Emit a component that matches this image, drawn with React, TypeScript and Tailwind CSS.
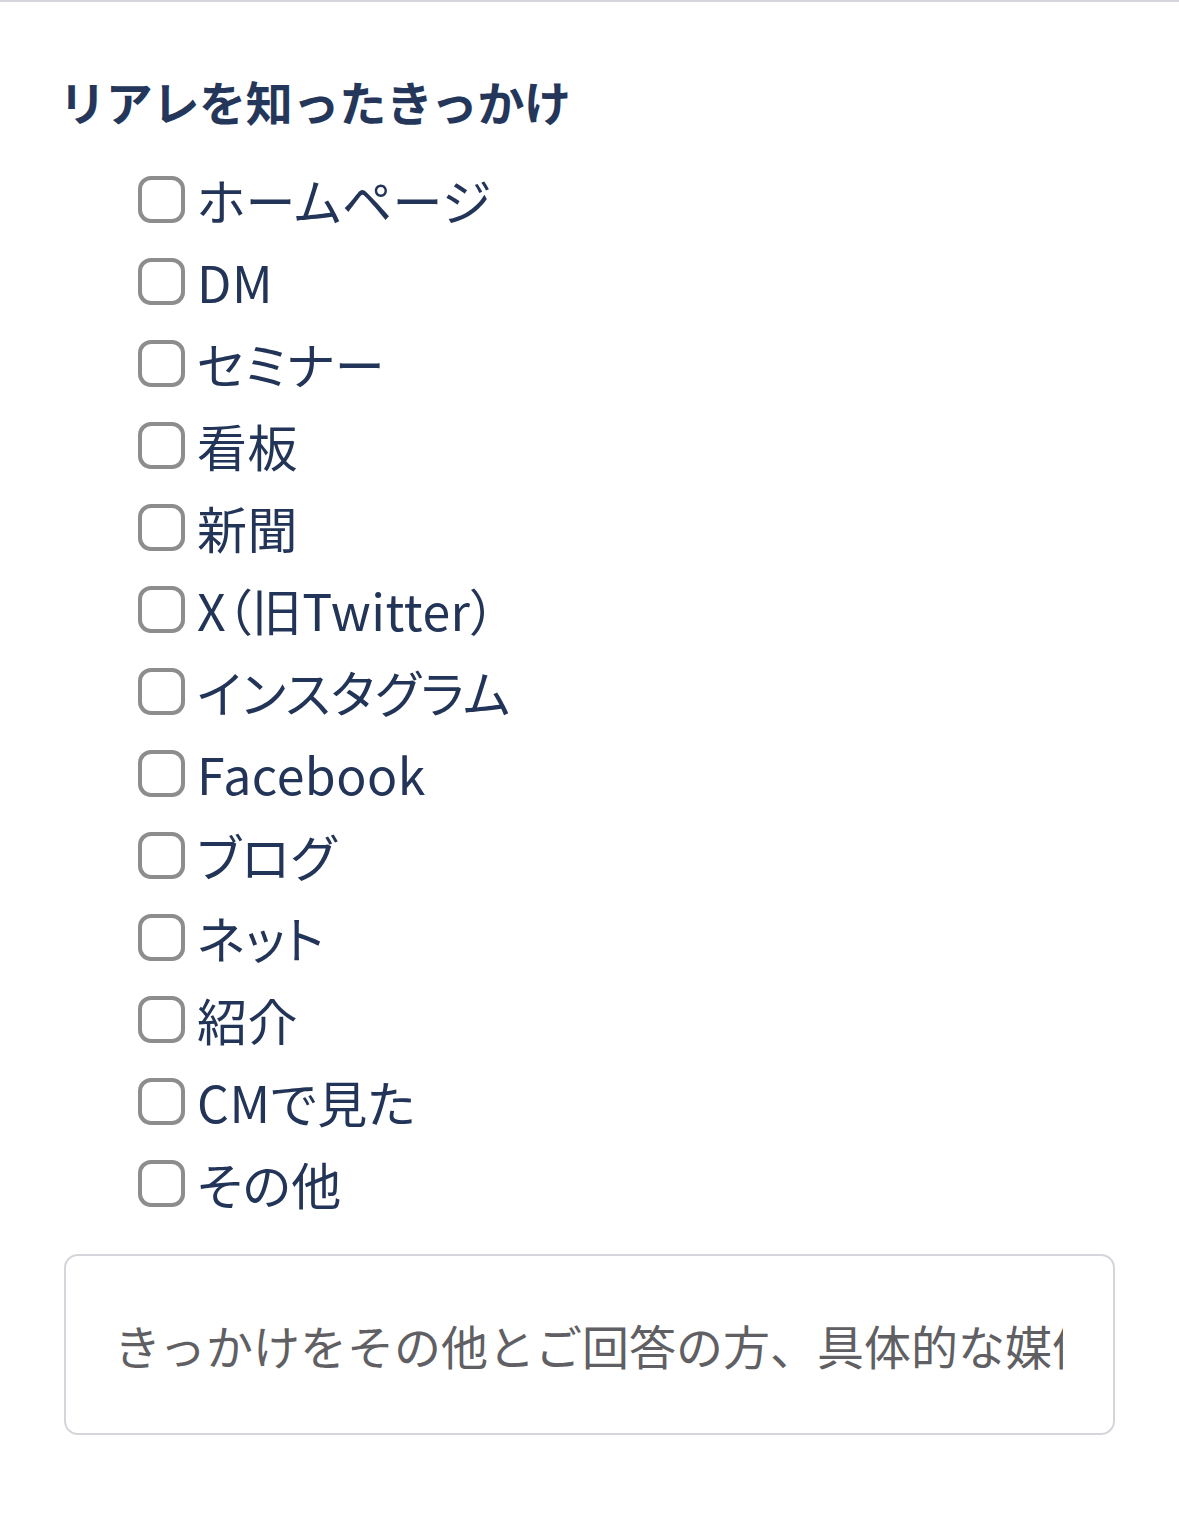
import { useState } from "react";

const options = [
  "ホームページ",
  "DM",
  "セミナー",
  "看板",
  "新聞",
  "X（旧Twitter）",
  "インスタグラム",
  "Facebook",
  "ブログ",
  "ネット",
  "紹介",
  "CMで見た",
  "その他",
];

export default function App() {
  const [checked, setChecked] = useState<string[]>([]);
  const [other, setOther] = useState("");

  const toggle = (name: string) => {
    setChecked((prev) =>
      prev.includes(name) ? prev.filter((n) => n !== name) : [...prev, name]
    );
  };

  return (
    <div
      className="min-h-[1514px] bg-white border-t-2 border-[#d5d6db]"
      style={{ fontFamily: '"Noto Sans CJK JP", "Noto Sans", sans-serif' }}
    >
      <div className="px-[64px] pt-[64px]">
        <h2 className="-ml-[5px] text-[47px] leading-[70px] tracking-[-0.3px] font-bold text-[#24375a]">
          リアレを知ったきっかけ
        </h2>

        <div className="mt-[22px] pl-[74px] flex flex-col">
          {options.map((name) => (
            <label
              key={name}
              className="h-[82px] flex items-center gap-[12px] cursor-pointer"
            >
              <input
                type="checkbox"
                checked={checked.includes(name)}
                onChange={() => toggle(name)}
                className="appearance-none w-[47px] h-[47px] shrink-0 rounded-[13px] border-[4px] border-[#8d8d8d] bg-white checked:bg-[#24375a] checked:border-[#24375a]"
              />
              <span className="text-[50px] leading-none tracking-[0.5px] text-[#223457] [font-feature-settings:'palt']">
                {name}
              </span>
            </label>
          ))}
        </div>

        <input
          type="text"
          value={other}
          onChange={(e) => setOther(e.target.value)}
          placeholder="きっかけをその他とご回答の方、具体的な媒体名をご記入ください"
          className="mt-[30px] block w-full h-[181px] rounded-[14px] border-2 border-[#d5d6db] pl-[48px] pr-[50px] text-[47px] text-[#223457] placeholder:text-[#5f5f64] outline-none"
        />
      </div>
    </div>
  );
}
